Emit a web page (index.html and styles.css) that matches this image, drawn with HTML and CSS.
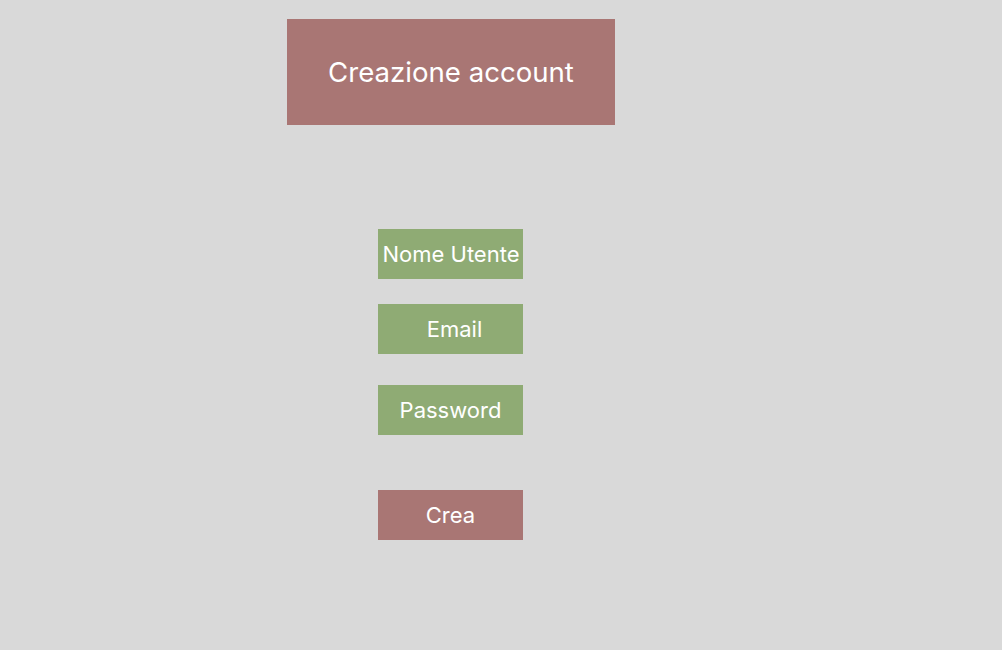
FILE: index.html
```html
<!DOCTYPE html>
<html lang="it">
  <head>
    <title>Creazione account</title>
    <link rel="stylesheet" href="styles.css">
  </head>
  <body>
    <div class="page">
      <h1 class="title">Creazione account</h1>

      <div class="form">
        <div class="field">Nome Utente</div>
        <div class="field email">Email</div>
        <div class="field password">Password</div>
        <button class="create">Crea</button>
      </div>
    </div>
  </body>
</html>
```
FILE: styles.css
```css
body {
  margin: 0;
  background-color: #d9d9d9;
  font-family: Inter, "Noto Sans", sans-serif;
  color: #ffffff;
}

.page {
  width: 1002px;
  height: 650px;
  padding-top: 19px;
  box-sizing: border-box;
}

.title {
  margin: 0 0 0 287px;
  width: 328px;
  height: 106px;
  background-color: #a97674;
  font-size: 27.6px;
  font-weight: 400;
  display: flex;
  align-items: center;
  justify-content: center;
}

.form {
  margin: 104px 0 0 378px;
  display: flex;
  flex-direction: column;
  width: 145px;
}

.field,
.create {
  width: 145px;
  height: 50px;
  display: flex;
  align-items: center;
  justify-content: center;
  font-size: 22px;
  white-space: nowrap;
  box-sizing: border-box;
}

.field {
  background-color: #8fab74;
  padding-left: 1px;
}

.email {
  margin-top: 25px;
  padding-left: 8px;
}

.password {
  margin-top: 31px;
  padding-left: 0;
}

.create {
  margin-top: 55px;
  border: none;
  background-color: #a97674;
  color: #ffffff;
  font-family: inherit;
  padding: 0;
}
```
